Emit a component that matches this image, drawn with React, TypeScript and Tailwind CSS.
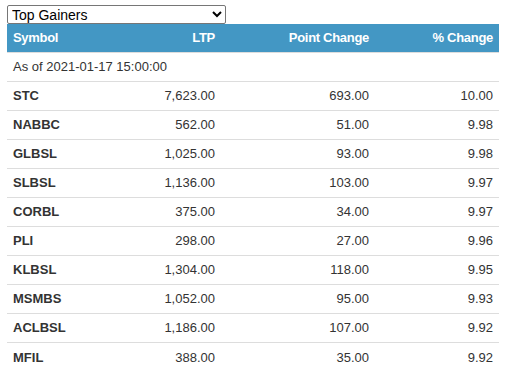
import { useState } from 'react'

const rows = [
  ['STC', '7,623.00', '693.00', '10.00'],
  ['NABBC', '562.00', '51.00', '9.98'],
  ['GLBSL', '1,025.00', '93.00', '9.98'],
  ['SLBSL', '1,136.00', '103.00', '9.97'],
  ['CORBL', '375.00', '34.00', '9.97'],
  ['PLI', '298.00', '27.00', '9.96'],
  ['KLBSL', '1,304.00', '118.00', '9.95'],
  ['MSMBS', '1,052.00', '95.00', '9.93'],
  ['ACLBSL', '1,186.00', '107.00', '9.92'],
  ['MFIL', '388.00', '35.00', '9.92'],
]

const cols = 'grid grid-cols-[100px_114px_154px_124px]'

export default function App() {
  const [kind, setKind] = useState('gainers')

  return (
    <div className="min-h-screen bg-white pt-[5px] pl-[7px] font-['Liberation_Sans',Arial,sans-serif] text-[13px] text-[#333]">
      <select
        value={kind}
        onChange={(e) => setKind(e.target.value)}
        className="block h-[19px] w-[219px] rounded-[2px] border border-[#767676] bg-white text-[14px] leading-none text-black"
      >
        <option value="gainers">Top Gainers</option>
        <option value="losers">Top Losers</option>
        <option value="turnover">Top Turnover</option>
      </select>

      <div className="w-[492px]">
        {/* header */}
        <div className={`${cols} h-[29px] items-center border-b border-[#ddd] bg-[#4397c4] font-bold tracking-[-0.3px] text-white`}>
          <div className="px-[6px]">Symbol</div>
          <div className="px-[6px] text-right">LTP</div>
          <div className="px-[6px] text-right">Point Change</div>
          <div className="px-[6px] text-right">% Change</div>
        </div>

        <div className="flex h-[29px] items-center border-b border-[#ddd] px-[6px]">
          As of 2021-01-17 15:00:00
        </div>

        {rows.map(([sym, ltp, pc, pct]) => (
          <div key={sym} className={`${cols} h-[29px] items-center border-b border-[#ddd] last:border-b-0`}>
            <div className="px-[6px] font-bold">{sym}</div>
            <div className="px-[6px] text-right">{ltp}</div>
            <div className="px-[6px] text-right">{pc}</div>
            <div className="px-[6px] text-right">{pct}</div>
          </div>
        ))}
      </div>
    </div>
  )
}
